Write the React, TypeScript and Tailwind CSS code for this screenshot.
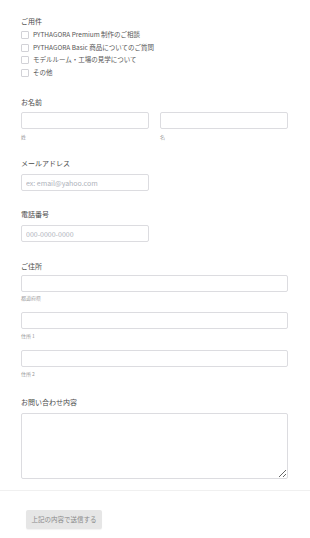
const options = [
  'PYTHAGORA Premium 制作のご相談',
  'PYTHAGORA Basic 商品についてのご質問',
  'モデルルーム・工場の見学について',
  'その他',
];

const Label = ({ children, className = '' }: { children: string; className?: string }) => (
  <p className={`h-[10px] text-[7px] leading-[10px] text-[#4a4a4a] ${className}`}>{children}</p>
);

const Sub = ({ children, className = '' }: { children: string; className?: string }) => (
  <p className={`h-[8px] text-[5px] leading-[8px] text-[#999] ${className}`}>{children}</p>
);

const Field = ({ placeholder, className = '' }: { placeholder?: string; className?: string }) => (
  <input
    placeholder={placeholder}
    className={`block h-[17px] rounded-[2px] border border-[#dcdce0] bg-white px-[4px] text-[7px] outline-none placeholder:text-[#aeb2ba] ${className}`}
  />
);

export default function App() {
  return (
    <div
      className="min-h-[538px] w-[310px] bg-white"
      style={{ fontFamily: '"Noto Sans CJK JP", "Noto Sans", sans-serif' }}
    >
      <div className="flex flex-col pl-[21px] pr-[22px] pt-[16px]">
        <Label>ご用件</Label>
        <div className="mt-[3px] flex flex-col">
          {options.map((o) => (
            <label key={o} className="flex h-[12.5px] items-center gap-[4px]">
              <span className="block size-[8px] rounded-[1px] border border-[#d2d2d7] bg-white" />
              <span className="text-[6.5px] text-[#555]">{o}</span>
            </label>
          ))}
        </div>

        <Label className="mt-[18px]">お名前</Label>
        <div className="mt-[5px] grid grid-cols-2 gap-[11px]">
          <div>
            <Field className="w-full" />
            <Sub className="mt-[4px]">姓</Sub>
          </div>
          <div>
            <Field className="w-full" />
            <Sub className="mt-[4px]">名</Sub>
          </div>
        </div>

        <Label className="mt-[17px]">メールアドレス</Label>
        <Field className="mt-[6px] w-[128px]" placeholder="ex: email@yahoo.com" />

        <Label className="mt-[18px]">電話番号</Label>
        <Field className="mt-[6px] w-[128px]" placeholder="000-0000-0000" />

        <Label className="mt-[19px]">ご住所</Label>
        <Field className="mt-[4px] w-full" />
        <Sub className="mt-[2px]">都道府県</Sub>
        <Field className="mt-[10px] w-full" />
        <Sub className="mt-[3px]">住所 1</Sub>
        <Field className="mt-[10px] w-full" />
        <Sub className="mt-[3px]">住所 2</Sub>

        <Label className="mt-[19px]">お問い合わせ内容</Label>
        <textarea className="mt-[6px] block h-[66px] w-full rounded-[2px] border border-[#dcdce0] bg-white text-[7px] outline-none" />
      </div>

      <div className="mt-[11px] border-t border-[#f0f0f0] pl-[26px] pt-[12px]">
        <button className="h-[19px] w-[76px] rounded-[2px] bg-[#e6e6e6] text-[6.5px] text-[#8a8a8a] shadow-[0_1px_1px_rgba(0,0,0,0.05)]">
          上記の内容で送信する
        </button>
      </div>
    </div>
  );
}
